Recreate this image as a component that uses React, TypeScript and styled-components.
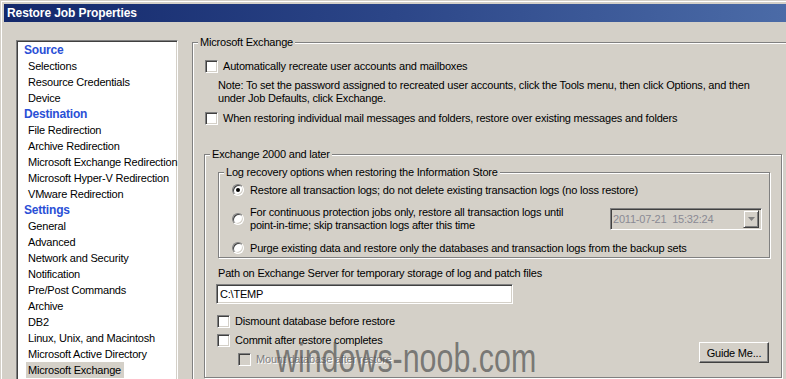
import React from 'react';
import styled, { createGlobalStyle } from 'styled-components';

const GlobalStyle = createGlobalStyle`
  html, body {
    margin: 0;
    padding: 0;
    background: #d4d0c8;
  }

  body {
    font-family: 'Liberation Sans', Arial, sans-serif;
    font-size: 11px;
    letter-spacing: -0.2px;
    color: #000;
  }
`;

const Window = styled.div`
  position: relative;
  width: 786px;
  height: 379px;
  overflow: hidden;
  box-sizing: border-box;
  padding: 4px 0 0 4px;
  background: #d4d0c8;
  box-shadow: inset 1px 1px 0 #d4d0c8, inset 2px 2px 0 #fff;
`;

const TitleBar = styled.div`
  height: 18px;
  display: flex;
  align-items: center;
  padding-left: 3px;
  background: linear-gradient(to right, #13286b, #2c4688 50%, #4b6ba7);
`;

const Title = styled.span`
  color: #fff;
  font-weight: bold;
  font-size: 12px;
  letter-spacing: -0.1px;
`;

const Body = styled.div`
  display: flex;
  align-items: flex-start;
  padding-left: 12px;
`;

const NavPanel = styled.div`
  width: 162px;
  height: 380px;
  margin-top: 18px;
  box-sizing: border-box;
  background: #fff;
  border: 1px solid;
  border-color: #808080 #fff #fff #808080;
  box-shadow: inset 1px 1px 0 #404040, inset -1px -1px 0 #d4d0c8;
  padding-top: 1px;
`;

const NavHeader = styled.div`
  height: 16px;
  line-height: 16px;
  padding-left: 7px;
  font-size: 12px;
  font-weight: bold;
  color: #2a4fd6;
`;

const NavItem = styled.div<{ $selected?: boolean }>`
  width: fit-content;
  height: 16px;
  line-height: 16px;
  margin-left: 9px;
  padding: 0 3px 0 2px;
  white-space: nowrap;
  background: ${(p) => (p.$selected ? '#d4d0c8' : 'transparent')};
`;

const Main = styled.div`
  margin: 14px 0 0 14px;
`;

const Group = styled.fieldset<{ $width: number }>`
  width: ${(p) => p.$width}px;
  box-sizing: border-box;
  min-width: 0;
  margin: 0;
  padding: 0;
  border: 1px solid #808080;
  box-shadow: inset 1px 1px 0 #fff, 1px 1px 0 #fff;
`;

const Legend = styled.legend`
  margin-left: 5px;
  padding: 0 2px;
  line-height: 13px;
  background: #d4d0c8;
`;

const GroupBody = styled.div<{ $pad: string }>`
  padding: ${(p) => p.$pad};
  display: flex;
  flex-direction: column;
  align-items: flex-start;
`;

const CheckRow = styled.label<{ $top?: number; $left?: number; $disabled?: boolean }>`
  display: flex;
  align-items: center;
  gap: 5px;
  height: 16px;
  margin-top: ${(p) => p.$top ?? 0}px;
  margin-left: ${(p) => p.$left ?? 0}px;
  white-space: nowrap;
  color: ${(p) => (p.$disabled ? '#808080' : '#000')};
  text-shadow: ${(p) => (p.$disabled ? '1px 1px 0 #fff' : 'none')};
`;

const CheckBox = styled.span<{ $disabled?: boolean }>`
  width: 13px;
  height: 13px;
  flex: none;
  box-sizing: border-box;
  border: 1px solid;
  border-color: #808080 #fff #fff #808080;
  box-shadow: inset 1px 1px 0 #404040, inset -1px -1px 0 #d4d0c8;
  background: ${(p) => (p.$disabled ? '#d4d0c8' : '#fff')};
`;

const Note = styled.div`
  margin: 5px 0 0 13px;
  line-height: 13px;
`;

const RadioRow = styled.label<{ $top: number }>`
  display: flex;
  align-items: center;
  gap: 6px;
  min-height: 16px;
  margin-top: ${(p) => p.$top}px;
  white-space: nowrap;
`;

const Radio = styled.span<{ $checked?: boolean }>`
  position: relative;
  width: 12px;
  height: 12px;
  flex: none;
  box-sizing: border-box;
  border-radius: 50%;
  border: 1px solid;
  border-color: #808080 #fff #fff #808080;
  box-shadow: inset 1px 1px 0 #404040, inset -1px -1px 0 #d4d0c8;
  background: #fff;

  &::after {
    content: '';
    display: ${(p) => (p.$checked ? 'block' : 'none')};
    position: absolute;
    left: 3px;
    top: 3px;
    width: 4px;
    height: 4px;
    border-radius: 50%;
    background: #000;
  }
`;

const TwoLine = styled.span`
  width: 354px;
  line-height: 13px;
`;

const Combo = styled.div`
  width: 152px;
  height: 22px;
  box-sizing: border-box;
  display: flex;
  align-items: center;
  justify-content: space-between;
  padding: 0 2px;
  border: 1px solid;
  border-color: #808080 #fff #fff #808080;
  box-shadow: inset 1px 1px 0 #404040, inset -1px -1px 0 #d4d0c8;
  background: #d4d0c8;
  color: #8a8a94;
  white-space: pre;
`;

const ComboButton = styled.span`
  width: 16px;
  height: 18px;
  box-sizing: border-box;
  display: flex;
  align-items: center;
  justify-content: center;
  border: 1px solid;
  border-color: #d4d0c8 #404040 #404040 #d4d0c8;
  box-shadow: inset 1px 1px 0 #fff, inset -1px -1px 0 #808080;
  background: #d4d0c8;
`;

const Label = styled.div`
  margin-top: 9px;
  line-height: 13px;
  white-space: nowrap;
`;

const TextInput = styled.div`
  width: 297px;
  height: 20px;
  margin: 4px 0 0 -2px;
  box-sizing: border-box;
  display: flex;
  align-items: center;
  padding-left: 3px;
  border: 1px solid;
  border-color: #808080 #fff #fff #808080;
  box-shadow: inset 1px 1px 0 #404040, inset -1px -1px 0 #d4d0c8;
  background: #fff;
`;

const BottomArea = styled.div`
  align-self: stretch;
  display: flex;
  justify-content: space-between;
  align-items: flex-end;
  margin-top: 9px;
`;

const CheckColumn = styled.div`
  display: flex;
  flex-direction: column;
  align-items: flex-start;
`;

const Button = styled.button`
  width: 70px;
  height: 21px;
  margin-bottom: 4px;
  padding: 0;
  font: inherit;
  letter-spacing: inherit;
  color: #000;
  background: #d4d0c8;
  border: 1px solid;
  border-color: #fff #404040 #404040 #fff;
  box-shadow: inset -1px -1px 0 #808080;
`;

const Watermark = styled.div`
  position: absolute;
  left: 276px;
  top: 338px;
  font-size: 40px;
  letter-spacing: 0;
  line-height: 1;
  color: rgba(80, 80, 80, 0.7);
  transform: scaleX(0.76);
  transform-origin: left top;
  white-space: nowrap;
  pointer-events: none;
`;

const nav: { header: string; items: string[] }[] = [
  { header: 'Source', items: ['Selections', 'Resource Credentials', 'Device'] },
  {
    header: 'Destination',
    items: [
      'File Redirection',
      'Archive Redirection',
      'Microsoft Exchange Redirection',
      'Microsoft Hyper-V Redirection',
      'VMware Redirection',
    ],
  },
  {
    header: 'Settings',
    items: [
      'General',
      'Advanced',
      'Network and Security',
      'Notification',
      'Pre/Post Commands',
      'Archive',
      'DB2',
      'Linux, Unix, and Macintosh',
      'Microsoft Active Directory',
      'Microsoft Exchange',
    ],
  },
];

export default function App() {
  return (
    <Window>
      <GlobalStyle />
      <TitleBar>
        <Title>Restore Job Properties</Title>
      </TitleBar>
      <Body>
        <NavPanel>
          {nav.map((section) => (
            <React.Fragment key={section.header}>
              <NavHeader>{section.header}</NavHeader>
              {section.items.map((item) => (
                <NavItem key={item} $selected={item === 'Microsoft Exchange'}>
                  {item}
                </NavItem>
              ))}
            </React.Fragment>
          ))}
        </NavPanel>
        <Main>
          <Group $width={620}>
            <Legend>Microsoft Exchange</Legend>
            <GroupBody $pad='0 0 40px 12px'>
              <CheckRow $top={9}>
                <CheckBox />
                Automatically recreate user accounts and mailboxes
              </CheckRow>
              <Note>
                Note: To set the password assigned to recreated user accounts, click the Tools menu, then click Options, and then
                <br />
                under Job Defaults, click Exchange.
              </Note>
              <CheckRow $top={5}>
                <CheckBox />
                When restoring individual mail messages and folders, restore over existing messages and folders
              </CheckRow>
              <Group $width={578} style={{ marginTop: 22, marginLeft: -1 }}>
                <Legend>Exchange 2000 and later</Legend>
                <GroupBody $pad='0 12px 10px 13px'>
                  <Group $width={552} style={{ marginTop: 5 }}>
                    <Legend>Log recovery options when restoring the Information Store</Legend>
                    <GroupBody $pad='0 0 1px 13px'>
                      <RadioRow $top={3}>
                        <Radio $checked />
                        Restore all transaction logs; do not delete existing transaction logs (no loss restore)
                      </RadioRow>
                      <RadioRow $top={8}>
                        <Radio />
                        <TwoLine>
                          For continuous protection jobs only, restore all transaction logs until
                          <br />
                          point-in-time; skip transaction logs after this time
                        </TwoLine>
                        <Combo>
                          <span>2011-07-21  15:32:24</span>
                          <ComboButton>
                            <svg width='7' height='5' viewBox='0 0 7 5'>
                              <path d='M0 0h7L3.5 4z' fill='#808080' />
                            </svg>
                          </ComboButton>
                        </Combo>
                      </RadioRow>
                      <RadioRow $top={8}>
                        <Radio />
                        Purge existing data and restore only the databases and transaction logs from the backup sets
                      </RadioRow>
                    </GroupBody>
                  </Group>
                  <Label>Path on Exchange Server for temporary storage of log and patch files</Label>
                  <TextInput>C:\TEMP</TextInput>
                  <BottomArea>
                    <CheckColumn>
                      <CheckRow $left={-1}>
                        <CheckBox />
                        Dismount database before restore
                      </CheckRow>
                      <CheckRow $top={3} $left={-1}>
                        <CheckBox />
                        Commit after restore completes
                      </CheckRow>
                      <CheckRow $top={3} $left={20} $disabled>
                        <CheckBox $disabled />
                        Mount database after restore
                      </CheckRow>
                    </CheckColumn>
                    <Button>Guide Me...</Button>
                  </BottomArea>
                </GroupBody>
              </Group>
            </GroupBody>
          </Group>
        </Main>
      </Body>
      <Watermark>windows-noob.com</Watermark>
    </Window>
  );
}
